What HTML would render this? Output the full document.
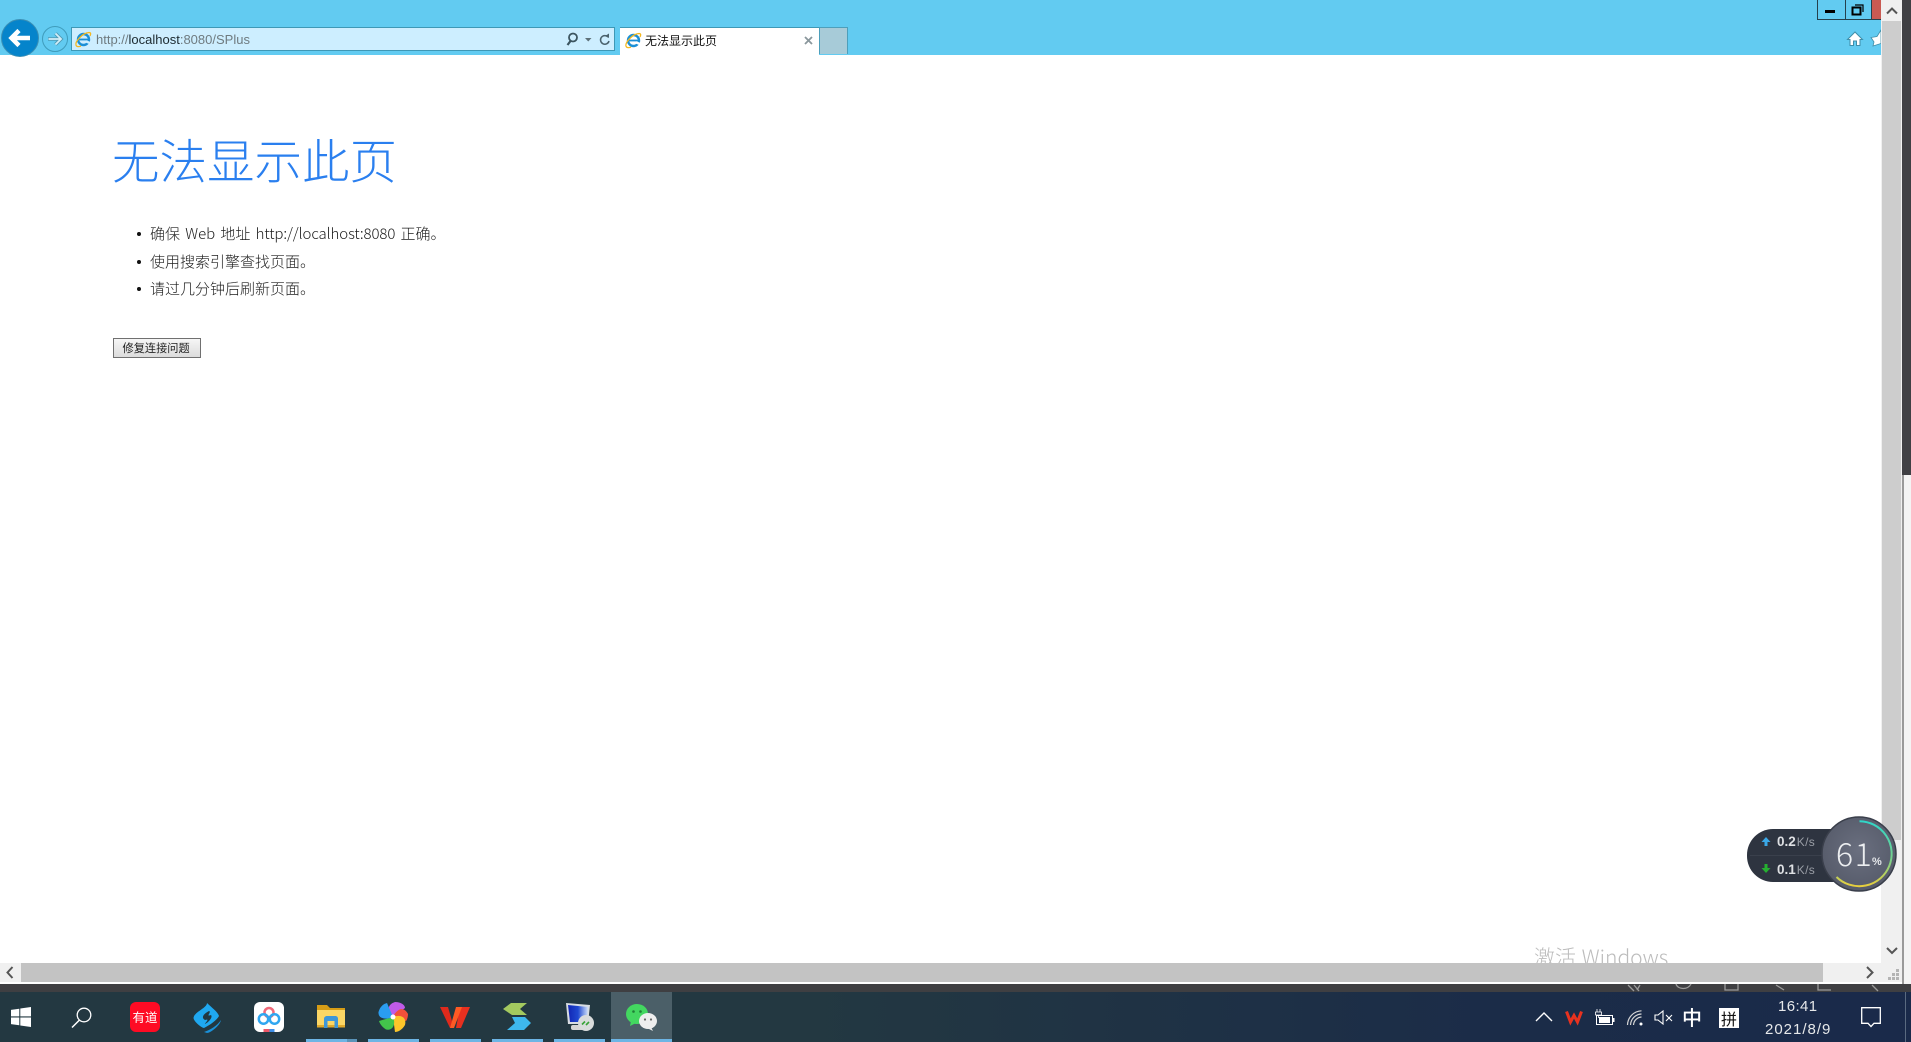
<!DOCTYPE html>
<html><head><meta charset="utf-8"><style>
*{box-sizing:border-box}
html,body{margin:0;padding:0;width:1911px;height:1042px;overflow:hidden;background:#fff;font-family:"Liberation Sans","Noto Sans CJK SC",sans-serif}
.a{position:absolute}
.t{position:absolute;white-space:nowrap;line-height:1}
.cjk{font-family:"Noto Sans CJK SC","Liberation Sans",sans-serif}
svg{position:absolute;overflow:visible}
.bar{position:absolute;top:1039px;height:3px;background:#6db5e5}
</style></head><body>
<div class="a" style="left:0;top:0;width:1881px;height:55px;background:#62cbf1"></div>
<!-- back -->
<svg style="left:0;top:15px" width="110" height="40" viewBox="0 0 110 40">
<circle cx="20" cy="23" r="18.500" fill="#0584cb" stroke="#3a8fb5" stroke-width="1"/>
<path d="M30 23H12M19 15.500L11.500 23L19 30.500" fill="none" stroke="#fff" stroke-width="4.500"/>
<circle cx="55" cy="24" r="12.500" fill="#62cbf1" stroke="#3f9cbc" stroke-width="1"/>
<path d="M48 24H61M55.500 18.500L61 24L55.500 29.500" fill="none" stroke="#4f9bb6" stroke-width="3.600"/>
<path d="M48.500 24H60.500M55.500 18.500L61 24L55.500 29.500" fill="none" stroke="#d3eef8" stroke-width="1.800"/>
</svg>
<!-- address bar -->
<div class="a" style="left:71px;top:27px;width:544px;height:24px;background:#cdeeff;border:1px solid #3e98b6"></div>
<svg style="left:75px;top:31px" width="17" height="17" viewBox="0 0 17 17">
<circle cx="8.500" cy="8.500" r="5.500" fill="none" stroke="#1b8fd6" stroke-width="2.400"/>
<path d="M4 8.500H13" stroke="#1b8fd6" stroke-width="1.800"/>
<path d="M11 10.400L16 12.500" stroke="#cdeeff" stroke-width="2.400"/>
<path d="M1 14C0 11 7 2 14 1.500C16 1.500 16 3 15 5M1 14C1.500 16 4 16 6 15" fill="none" stroke="#f5b81f" stroke-width="1.300"/>
</svg>
<div class="t" style="left:96px;top:33px;font-size:13px;color:#6f7b80;height:14px"><span>http://</span><span style="color:#1c2a30">localhost</span><span>:8080/SPlus</span></div>
<svg style="left:562px;top:31px" width="50" height="17" viewBox="0 0 50 17">
<circle cx="11" cy="6.500" r="4" fill="none" stroke="#3c5560" stroke-width="1.800"/>
<path d="M8.500 10L5.500 14" stroke="#3c5560" stroke-width="2.200"/>
<path d="M23 7H29.500L26.250 10.500Z" fill="#5d7078"/>
<path d="M46 6A4.300 4.300 0 1 0 47 10" fill="none" stroke="#4a626d" stroke-width="1.500"/>
<path d="M43 5L47 2.500V7Z" fill="#4a626d"/>
</svg>
<!-- tab -->
<div class="a" style="left:620px;top:27px;width:199px;height:28px;background:#fff;border-top:1px solid #3e98b6"></div>
<div class="a" style="left:819px;top:27px;width:29px;height:27px;background:#a7cbd8;border:1px solid #4d9fbb;border-bottom:0"></div>
<svg style="left:625px;top:32px" width="17" height="17" viewBox="0 0 17 17">
<circle cx="8.500" cy="8.500" r="5.500" fill="none" stroke="#1b8fd6" stroke-width="2.400"/>
<path d="M4 8.500H13" stroke="#1b8fd6" stroke-width="1.800"/>
<path d="M11 10.400L16 12.500" stroke="#fff" stroke-width="2.400"/>
<path d="M1 14C0 11 7 2 14 1.500C16 1.500 16 3 15 5M1 14C1.500 16 4 16 6 15" fill="none" stroke="#f5b81f" stroke-width="1.300"/>
</svg>
<div class="t cjk" style="left:645px;top:35px;font-size:12px;color:#111">无法显示此页</div>
<svg style="left:804px;top:36px" width="9" height="9" viewBox="0 0 9 9"><path d="M1 1L8 8M8 1L1 8" stroke="#8a979c" stroke-width="1.800"/></svg>
<!-- window buttons -->
<div class="a" style="left:1817px;top:0;width:29px;height:20px;background:#62cbf1;border:1px solid #25414d;border-top:0;border-right:0"></div>
<div class="a" style="left:1845px;top:0;width:27px;height:20px;background:#62cbf1;border:1px solid #25414d;border-top:0"></div>
<div class="a" style="left:1872px;top:0;width:9px;height:20px;background:#c95a52;border-bottom:1px solid #25414d"></div>
<svg style="left:1817px;top:0" width="60" height="20" viewBox="0 0 60 20">
<path d="M8 11.500H18" stroke="#000" stroke-width="3"/>
<rect x="35.500" y="7.500" width="8" height="7" fill="none" stroke="#000" stroke-width="2"/>
<path d="M38 5H46V12" fill="none" stroke="#000" stroke-width="1.200"/>
</svg>
<svg style="left:1846px;top:30px" width="35" height="18" viewBox="0 0 35 18">
<path d="M1.500 9.500L9 2L16.500 9.500H14V15.500H10.500V11H7.500V15.500H4V9.500Z" fill="#fff" stroke="#3f8ea9" stroke-width="1"/>
<path d="M35 0L31 6.500L25 7.500L28 12L27 16L35 13.500Z" fill="#fff" stroke="#3f8ea9" stroke-width=".8"/>
</svg>
<!-- page -->
<div class="t cjk" style="left:112px;top:131px;font-size:47.500px;font-weight:300;color:#2a7fef;line-height:55px">无法显示此页</div>
<div class="a" style="left:137px;top:232px;width:4px;height:4px;border-radius:50%;background:#111"></div>
<div class="a" style="left:137px;top:260px;width:4px;height:4px;border-radius:50%;background:#111"></div>
<div class="a" style="left:137px;top:287px;width:4px;height:4px;border-radius:50%;background:#111"></div>
<div class="t cjk" style="left:150px;top:225px;font-size:15px;font-weight:300;color:#1c1c1c;line-height:18px;word-spacing:1.900px">确保 Web 地址 <span style="letter-spacing:-.1px">http://localhost:8080</span> 正确。</div>
<div class="t cjk" style="left:150px;top:253px;font-size:15px;font-weight:300;color:#1c1c1c;line-height:18px">使用搜索引擎查找页面。</div>
<div class="t cjk" style="left:150px;top:280px;font-size:15px;font-weight:300;color:#1c1c1c;line-height:18px">请过几分钟后刷新页面。</div>
<div class="a" style="left:113px;top:338px;width:88px;height:20px;background:linear-gradient(#f6f6f6,#dcdcdc);border:1px solid #707070"></div>
<div class="t cjk" style="left:122.500px;top:342px;font-size:11.200px;color:#222;line-height:13px">修复连接问题</div>
<!-- watermark -->
<div class="a" style="left:1530px;top:940px;width:200px;height:23px;overflow:hidden"><div class="t cjk" style="left:4px;top:4px;font-size:21px;color:#bcbcbc;font-weight:300;line-height:26px;word-spacing:1px">激活 Windows</div></div>
<!-- vertical scrollbar -->
<div class="a" style="left:1881px;top:0;width:21px;height:985px;background:#f0f0f0"></div>
<div class="a" style="left:1882px;top:21px;width:19px;height:819px;background:#cdcdcd"></div>
<div class="a" style="left:1902px;top:0;width:9px;height:985px;background:#f4f4f4"></div>
<div class="a" style="left:1902px;top:0;width:2px;height:985px;background:#9a9a9a"></div>
<div class="a" style="left:1902px;top:0;width:9px;height:475px;background:#404044"></div>
<svg style="left:1881px;top:0" width="21" height="21" viewBox="0 0 21 21"><path d="M6 13.500L11 8.500L16 13.500" fill="none" stroke="#555" stroke-width="2"/></svg>
<svg style="left:1881px;top:941px" width="21" height="21" viewBox="0 0 21 21"><path d="M6 7L11 12L16 7" fill="none" stroke="#555" stroke-width="2"/></svg>
<!-- horizontal scrollbar -->
<div class="a" style="left:0;top:963px;width:1902px;height:20px;background:#f0f0f0"></div>
<div class="a" style="left:21px;top:963px;width:1802px;height:19px;background:#c3c3c3"></div>
<div class="a" style="left:0;top:982px;width:1902px;height:2px;background:#fff"></div>
<svg style="left:0;top:963px" width="21" height="19" viewBox="0 0 21 19"><path d="M12.500 4L7.500 9.500L12.500 15" fill="none" stroke="#555" stroke-width="2"/></svg>
<svg style="left:1860px;top:963px" width="21" height="19" viewBox="0 0 21 19"><path d="M7 4L12.500 9.500L7 15" fill="none" stroke="#555" stroke-width="2"/></svg>
<svg style="left:1887px;top:969px" width="14" height="12" viewBox="0 0 14 12"><g fill="#b4b4b4"><rect x="9" y="0" width="3" height="3"/><rect x="5" y="4" width="3" height="3"/><rect x="9" y="4" width="3" height="3"/><rect x="1" y="8" width="3" height="3"/><rect x="5" y="8" width="3" height="3"/><rect x="9" y="8" width="3" height="3"/></g></svg>
<!-- dark strip -->
<div class="a" style="left:0;top:984px;width:1911px;height:8px;background:#3f3f42"></div>
<svg style="left:1620px;top:984px" width="280" height="8" viewBox="0 0 280 8"><g fill="none" stroke="#9a9a9a" stroke-width="1.300">
<path d="M8 1L14 7M14 1L19 7M20 1L17 6"/><path d="M56 0C58 6 68 6 71 0"/><path d="M105 0V6H118V0"/><path d="M156 1L164 6"/><path d="M198 0V6H211"/><path d="M252 1L258 7"/></g></svg>
<!-- taskbar -->
<div class="a" style="left:0;top:992px;width:1911px;height:50px;background:linear-gradient(90deg,#233841 0%,#233841 42%,#1b2c48 78%,#1a2a4a 100%)"></div>
<div class="a" style="left:611px;top:992px;width:61px;height:50px;background:#4b5f68"></div>
<div class="bar" style="left:306px;width:41px"></div><div class="bar" style="left:347px;width:10px;background:#5a93b8"></div>
<div class="bar" style="left:368px;width:51px"></div>
<div class="bar" style="left:430px;width:51px"></div>
<div class="bar" style="left:492px;width:51px"></div>
<div class="bar" style="left:554px;width:51px"></div>
<div class="bar" style="left:611px;width:61px"></div>
<!-- start -->
<svg style="left:11px;top:1007px" width="20" height="20" viewBox="0 0 20 20"><path d="M0 2.900L8.300 1.700V9.400H0ZM9.300 1.500L20 0V9.400H9.300ZM0 10.500H8.300V18.300L0 17.100ZM9.300 10.500H20V20L9.300 18.500Z" fill="#fff"/></svg>
<svg style="left:71px;top:1007px" width="21" height="21" viewBox="0 0 21 21"><circle cx="13" cy="8" r="6.800" fill="none" stroke="#fff" stroke-width="1.300"/><path d="M8.500 13L1 20.500" stroke="#fff" stroke-width="1.500"/></svg>
<!-- youdao -->
<div class="a" style="left:130px;top:1002px;width:30px;height:30px;border-radius:6px;background:#fe0b24"></div>
<div class="t cjk" style="left:132.500px;top:1009px;font-size:12.500px;font-weight:400;color:#fff;line-height:16px">有道</div>
<!-- blue -->
<svg style="left:193px;top:1003px" width="29" height="30" viewBox="0 0 29 30">
<path d="M14 0C14 5 1 9 .5 15C1 19 9 25 11 25C17 22 24 17 26 13C25 9 18 4 14 0Z" fill="#1fa8f0"/>
<path d="M16 8C10 11 8 15 12 17C18 15 11 21 12 21C16 19 20 14 18 12C12 14 19 9 16 8Z" fill="#223842"/>
<path d="M11 29C17 27 24 23 28 17C27 23 17 30 14 30Z" fill="#1a90d8"/>
</svg>
<!-- baidu -->
<svg style="left:254px;top:1002px" width="30" height="30" viewBox="0 0 30 30">
<rect width="30" height="30" rx="6" fill="#fff"/>
<circle cx="15" cy="10.500" r="4.500" fill="none" stroke="#f06a7a" stroke-width="2.500"/>
<circle cx="9.500" cy="17" r="4.700" fill="none" stroke="#2fa6f0" stroke-width="2.500"/>
<circle cx="20.500" cy="17" r="4.700" fill="none" stroke="#2fa6f0" stroke-width="2.500"/>
<rect x="9.500" y="27" width="6" height="3" fill="#ee5666"/><rect x="15.500" y="27" width="5" height="3" fill="#3d8fe8"/>
</svg>
<!-- folder -->
<svg style="left:317px;top:1005px" width="28" height="23" viewBox="0 0 28 23">
<path d="M0 0H10L13 3H28V5H0Z" fill="#d69d16"/>
<path d="M0 5H28V22H0Z" fill="#fbd665"/>
<path d="M0 20H28V22.500H0Z" fill="#e0a92b"/>
<path d="M7 23V14C7 11.500 9 11 10 11H18C20 11 21 12 21 14V23H17.500V16H10.500V23Z" fill="#3d96d9"/>
</svg>
<!-- colorful -->
<svg style="left:378px;top:1002px" width="30" height="30" viewBox="0 0 30 30">
<path d="M15 15C10 10 8 3 17 0C23 0 27 3 27 6Z" fill="#c05be8"/>
<path d="M15 15C18 8 25 3 30 12C30 15 29 18 28 19Z" fill="#f2503a"/>
<path d="M15 15C22 12 29 15 27 23C24 28 20 30 17 30Z" fill="#fcc52a"/>
<path d="M15 15C18 22 15 29 8 27.500C4 25 2 22 1 19Z" fill="#43c44b"/>
<path d="M15 15C8 18 0 17 .5 10C2 5 5 2 9 1Z" fill="#2a9df0"/>
<circle cx="15" cy="15" r="2.500" fill="#fff"/>
</svg>
<!-- wps -->
<svg style="left:440px;top:1006px" width="30" height="22" viewBox="0 0 30 22">
<path d="M0 1H8L14 22H10Z" fill="#e02a1c"/>
<path d="M20 1H30L21 22H16Z" fill="#e8301f"/>
<path d="M16 1H22L14 22H10Z" fill="#ff5a24"/>
</svg>
<!-- green/blue -->
<svg style="left:503px;top:1003px" width="28" height="27" viewBox="0 0 28 27">
<path d="M8 0H24L17 6L24 12H9L0 6Z" fill="#a3c95f"/>
<path d="M9 14H22L28 20L21 27H4L12 20Z" fill="#3eb8ee"/>
</svg>
<!-- rdp -->
<svg style="left:565px;top:1002px" width="30" height="30" viewBox="0 0 30 30">
<defs><linearGradient id="sc" x1="0" y1="0" x2="1" y2="0"><stop offset="0" stop-color="#1226b4"/><stop offset=".5" stop-color="#1f48d0"/><stop offset="1" stop-color="#cfe0fa"/></linearGradient></defs>
<path d="M1 1L25 3L23 22L3 22Z" fill="#d8dde2"/>
<path d="M3 3L23 5L21.500 20L5 20Z" fill="url(#sc)"/>
<rect x="6" y="23" width="14" height="5" rx="2" fill="#d5d5d5"/>
<circle cx="21" cy="21" r="8" fill="#d9dcdc"/>
<path d="M17 22.500L20 19.500M21 23L24 20" stroke="#38a338" stroke-width="1.600"/>
</svg>
<!-- wechat -->
<svg style="left:626px;top:1004px" width="31" height="27" viewBox="0 0 31 27">
<ellipse cx="11" cy="10" rx="11" ry="10" fill="#43d760"/>
<path d="M5 17L4 22L10 19Z" fill="#43d760"/>
<circle cx="7.500" cy="7.500" r="1.300" fill="#1f7f36"/><circle cx="14.500" cy="7.500" r="1.300" fill="#1f7f36"/>
<ellipse cx="22" cy="17" rx="9" ry="8" fill="#eeeeee"/>
<path d="M25 23L27 27L21 24Z" fill="#eeeeee"/>
<circle cx="19" cy="15.500" r="1.100" fill="#666"/><circle cx="25" cy="15.500" r="1.100" fill="#666"/>
</svg>
<!-- tray -->
<svg style="left:1535px;top:1010px" width="18" height="13" viewBox="0 0 18 13"><path d="M1 11L9 3L17 11" fill="none" stroke="#fff" stroke-width="1.400"/></svg>
<svg style="left:1565px;top:1010px" width="18" height="14" viewBox="0 0 18 14"><path d="M1.500 1.500L5.500 12L9 5.500L12.500 12L16.500 1.500" fill="none" stroke="#e8321f" stroke-width="3"/></svg>
<svg style="left:1594px;top:1009px" width="21" height="17" viewBox="0 0 21 17">
<path d="M3 0V3M6 0V3M1.500 3H7.500V6H1.500ZM4.500 6V9" stroke="#fff" fill="none" stroke-width=".8"/>
<rect x="2.500" y="6.500" width="16" height="9" fill="none" stroke="#fff"/><rect x="5" y="8" width="11" height="6" fill="#fff"/><rect x="19" y="9" width="1.500" height="4" fill="#fff"/></svg>
<svg style="left:1627px;top:1010px" width="16" height="16" viewBox="0 0 16 16"><g fill="none" stroke="#d5d5d5" stroke-width="1.200"><path d="M.5 15A14.500 14.500 0 0 1 14.500 .8"/><path d="M3.500 15A11.500 11.500 0 0 1 14.500 4"/><path d="M6.500 15A8.500 8.500 0 0 1 14.500 7"/></g><circle cx="14" cy="14" r="1.500" fill="#fff"/></svg>
<svg style="left:1654px;top:1010px" width="19" height="15" viewBox="0 0 19 15"><path d="M1 5H4L9 1V14L4 10H1Z" fill="none" stroke="#fff" stroke-width="1.100"/><path d="M12 5L18 11M18 5L12 11" stroke="#fff" stroke-width="1.100"/></svg>
<div class="t cjk" style="left:1682px;top:1006px;font-size:20px;color:#fff;line-height:22px;font-weight:500">中</div>
<div class="a" style="left:1719px;top:1008px;width:20px;height:20px;background:#fff"></div>
<div class="t cjk" style="left:1721px;top:1009px;font-size:16px;color:#111;line-height:18px">拼</div>
<div class="t" style="left:1778px;top:998px;font-size:15px;color:#e6e8ea;line-height:17px;letter-spacing:.4px">16:41</div>
<div class="t" style="left:1765px;top:1021px;font-size:15px;color:#e6e8ea;line-height:17px;letter-spacing:1px">2021/8/9</div>
<svg style="left:1861px;top:1007px" width="20" height="21" viewBox="0 0 20 21"><path d="M.7 .7H19.300V16.300H13L10 19.500L7 16.300H.7Z" fill="none" stroke="#fff" stroke-width="1.300"/></svg>
<div class="a" style="left:1905px;top:992px;width:1px;height:50px;background:#5a6a80"></div>
<!-- net widget -->
<div class="a" style="left:1747px;top:829px;width:120px;height:53px;border-radius:26px;background:#2e3440"></div>
<div class="a" style="left:1750px;top:855px;width:100px;height:1px;background:#3a404c"></div>
<svg style="left:1759px;top:835px" width="14" height="50" viewBox="0 0 14 50">
<path d="M7 2L11.500 7H8.500V11H5.500V7H2.500Z" fill="#3aa7e6"/>
<path d="M7 38L11.500 33H8.500V29H5.500V33H2.500Z" fill="#25b030"/>
</svg>
<div class="t" style="left:1777px;top:834px;font-size:13.500px;font-weight:700;color:#dfe1e4;line-height:15px">0.2<span style="font-size:12px;font-weight:400;color:#9a9ea6;margin-left:1px;letter-spacing:.3px">K/s</span></div>
<div class="t" style="left:1777px;top:862px;font-size:13.500px;font-weight:700;color:#dfe1e4;line-height:15px">0.1<span style="font-size:12px;font-weight:400;color:#9a9ea6;margin-left:1px;letter-spacing:.3px">K/s</span></div>
<svg style="left:1820px;top:815px" width="78" height="78" viewBox="0 0 78 78">
<defs><linearGradient id="g" x1="0" y1="0" x2="0" y2="1"><stop offset="0" stop-color="#2fd6c8"/><stop offset=".6" stop-color="#7bd18a"/><stop offset="1" stop-color="#e8cf3c"/></linearGradient>
<radialGradient id="c" cx=".5" cy=".45" r=".55"><stop offset="0" stop-color="#6a6f7f"/><stop offset="1" stop-color="#565b6a"/></radialGradient></defs>
<circle cx="39" cy="39" r="37" fill="url(#c)" stroke="#3a3f4b" stroke-width="1.500"/>
<path d="M39.500 6.200A32.500 32.500 0 1 1 16.500 62" fill="none" stroke="url(#g)" stroke-width="2"/>
</svg>
<div class="t cjk" style="left:1836px;top:835px;font-size:32px;color:#eceef0;line-height:36px;letter-spacing:1.500px;font-weight:300">61</div>
<div class="t" style="left:1872px;top:856px;font-size:11px;font-weight:700;color:#e5e7ea;line-height:12px">%</div>
</body></html>
